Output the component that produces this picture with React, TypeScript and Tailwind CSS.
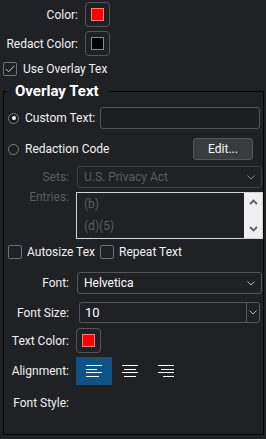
import React from "react";

function Swatch({ color, inner }: { color: string; inner: string }) {
  return (
    <div className="w-[25px] h-[25px] rounded-[4px] border border-[#55565a] flex items-center justify-center shrink-0">
      <div className="w-[13px] h-[13px] border" style={{ backgroundColor: color, borderColor: inner }} />
    </div>
  );
}

function Chevron({ color = "#bdbdbd" }: { color?: string }) {
  return (
    <svg width="8" height="5" viewBox="0 0 8 5" className="shrink-0">
      <path d="M0.5 0.5 L4 4 L7.5 0.5" fill="none" stroke={color} strokeWidth="1" />
    </svg>
  );
}

function CheckBox({ checked }: { checked?: boolean }) {
  return (
    <div className="w-[14px] h-[14px] rounded-[2px] border border-[#707175] bg-[#202124] flex items-center justify-center shrink-0">
      {checked && (
        <svg width="10" height="8" viewBox="0 0 10 8">
          <path d="M0.8 4 L3.6 6.8 L9.2 1" fill="none" stroke="#c8c8c8" strokeWidth="1" />
        </svg>
      )}
    </div>
  );
}

function Radio({ checked }: { checked?: boolean }) {
  return (
    <div className="w-[11px] h-[11px] rounded-full border border-[#808184] bg-[#1c1d20] flex items-center justify-center shrink-0">
      {checked && <div className="w-[4px] h-[4px] rounded-full bg-white" />}
    </div>
  );
}

function AlignIcon({ widths, align }: { widths: number[]; align: "start" | "center" | "end" }) {
  const cls = align === "start" ? "items-start" : align === "center" ? "items-center" : "items-end";
  return (
    <div className={`w-[16px] flex flex-col gap-[2.4px] ${cls}`}>
      {widths.map((w, i) => (
        <div key={i} className="h-[1px] bg-white" style={{ width: w }} />
      ))}
    </div>
  );
}

export default function App() {
  return (
    <div
      className="w-[266px] h-[439px] bg-[#202124] text-[#f2f2f2] text-[12px] leading-[16px] overflow-hidden"
      style={{ fontFamily: "Roboto, 'Liberation Sans', sans-serif" }}
    >
      <div className="pt-[2px]">
        <div className="flex items-center h-[25px]">
          <span className="w-[78px] text-right">Color:</span>
          <div className="ml-[7px]">
            <Swatch color="#ff0000" inner="#ff7a7a" />
          </div>
        </div>
        <div className="flex items-center h-[25px] mt-[4px]">
          <span className="w-[78px] text-right">Redact Color:</span>
          <div className="ml-[7px]">
            <Swatch color="#000000" inner="#8a8a8a" />
          </div>
        </div>
        <div className="flex items-center h-[14px] mt-[6px] pl-[3px]">
          <CheckBox checked />
          <span className="ml-[6px] whitespace-nowrap">Use Overlay Tex</span>
        </div>
      </div>

      <fieldset className="mt-[5px] ml-[3px] w-[261px] h-[354px] border border-[#050505]">
        <legend className="ml-[3px] pl-[8px] pr-[10px] text-[15px] leading-[20px] font-bold text-white">
          Overlay Text
        </legend>

        <div className="flex items-center h-[22px] mt-[6px]">
          <div className="ml-[4px]">
            <Radio checked />
          </div>
          <span className="ml-[6px] whitespace-nowrap">Custom Text:</span>
          <div className="ml-auto mr-[3px] w-[160px] h-[22px] rounded-[3px] border border-[#55565a] bg-[#1d1e21]" />
        </div>

        <div className="flex items-center h-[22px] mt-[9px]">
          <div className="ml-[4px]">
            <Radio />
          </div>
          <span className="ml-[6px] whitespace-nowrap">Redaction Code</span>
          <div className="ml-auto mr-[10px] w-[60px] h-[22px] rounded-[3px] border border-[#56575b] bg-[#3a3b3f] flex items-center justify-center text-white">
            Edit...
          </div>
        </div>

        <div className="flex items-center h-[22px] mt-[6px]">
          <span className="w-[65px] text-right text-[#5b5c60]">Sets:</span>
          <div className="ml-[8px] w-[185px] h-[22px] rounded-[3px] border border-[#3f4044] flex items-center pl-[6px] pr-[6px] text-[#5b5c60]">
            <span className="flex-1 whitespace-nowrap">U.S. Privacy Act</span>
            <Chevron color="#8a8a8a" />
          </div>
        </div>

        <div className="flex items-start mt-[4px]">
          <span className="w-[65px] text-right text-[#5b5c60] mt-[-3px]">Entries:</span>
          <div className="ml-[7px] w-[187px] h-[47px] border border-[#d4d4d4] flex">
            <div className="flex-1 flex flex-col pl-[7px] text-[#5b5c60]">
              <div className="h-[22px] flex items-center">(b)</div>
              <div className="h-[22px] flex items-center">(d)(5)</div>
            </div>
            <div className="w-[18px] bg-[#efefef] flex flex-col items-center justify-between py-[6px]">
              <svg width="9" height="6" viewBox="0 0 9 6">
                <path d="M1 5 L4.5 1.5 L8 5" fill="none" stroke="#5f5f5f" strokeWidth="1.8" />
              </svg>
              <svg width="9" height="6" viewBox="0 0 9 6">
                <path d="M1 1 L4.5 4.5 L8 1" fill="none" stroke="#5f5f5f" strokeWidth="1.8" />
              </svg>
            </div>
          </div>
        </div>

        <div className="flex items-center h-[14px] mt-[6px]">
          <div className="ml-[4px]">
            <CheckBox />
          </div>
          <span className="ml-[5px] w-[68px] overflow-hidden whitespace-nowrap">Autosize Tex</span>
          <div className="ml-[5px]">
            <CheckBox />
          </div>
          <span className="ml-[5px] whitespace-nowrap">Repeat Text</span>
        </div>

        <div className="flex items-center h-[22px] mt-[13px]">
          <span className="w-[65px] text-right">Font:</span>
          <div className="ml-[8px] w-[185px] h-[22px] rounded-[3px] border border-[#55565a] flex items-center pl-[6px] pr-[6px] text-white">
            <span className="flex-1 whitespace-nowrap">Helvetica</span>
            <Chevron />
          </div>
        </div>

        <div className="flex items-center h-[21px] mt-[8px]">
          <span className="w-[65px] text-right">Font Size:</span>
          <div className="ml-[10px] w-[181px] h-[21px] rounded-[3px] border border-[#55565a] flex items-stretch text-white">
            <span className="flex-1 flex items-center pl-[5px] text-[13px]">10</span>
            <div className="w-[13px] border-l border-[#55565a] flex items-center justify-center">
              <Chevron />
            </div>
          </div>
        </div>

        <div className="flex items-center h-[25px] mt-[5px]">
          <span className="w-[65px] text-right">Text Color:</span>
          <div className="ml-[7px]">
            <Swatch color="#ff0000" inner="#ff7a7a" />
          </div>
        </div>

        <div className="flex items-center h-[28px] mt-[4px]">
          <span className="w-[65px] text-right">Alignment:</span>
          <div className="ml-[7px] w-[36px] h-[28px] bg-[#0f5283] flex items-center justify-center">
            <AlignIcon widths={[16, 11, 16, 13]} align="start" />
          </div>
          <div className="w-[36px] h-[28px] flex items-center justify-center">
            <AlignIcon widths={[16, 12, 16, 12]} align="center" />
          </div>
          <div className="w-[36px] h-[28px] flex items-center justify-center">
            <AlignIcon widths={[16, 13, 16, 11]} align="end" />
          </div>
        </div>

        <div className="flex items-center h-[16px] mt-[10px]">
          <span className="w-[65px] text-right">Font Style:</span>
        </div>
      </fieldset>
    </div>
  );
}
